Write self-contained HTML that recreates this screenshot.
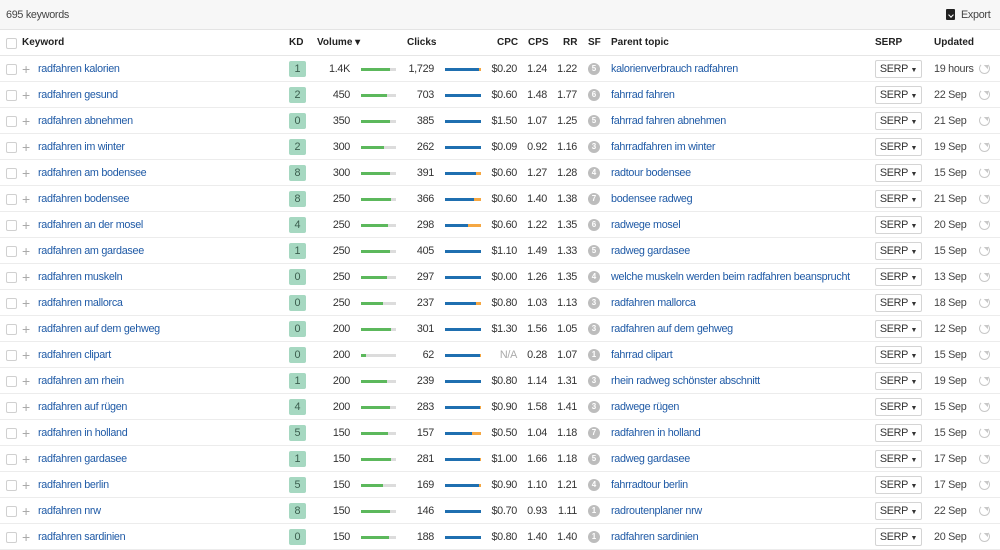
<!DOCTYPE html>
<html><head><meta charset="utf-8">
<style>
*{box-sizing:border-box;margin:0;padding:0}
body{width:1000px;height:550px;overflow:hidden;background:#fff;font-family:"Liberation Sans",Arial,sans-serif;font-size:10.8px;letter-spacing:-0.3px;color:#333;position:relative}
.top{position:absolute;left:0;top:0;width:1000px;height:30px;background:#f7f7f7;border-bottom:1px solid #e4e4e4}
.top .c{position:absolute;left:6px;top:9px;color:#444}
.top .e{position:absolute;left:961px;top:9px;color:#444}
.top .ic{position:absolute;left:946px;top:9px;width:9px;height:11px;background:#222;border-radius:1px}
.top .ic:after{content:"";position:absolute;left:3px;top:4px;width:3px;height:3px;border-bottom:1.5px solid #fff;border-right:1.5px solid #fff;transform:rotate(45deg)}
.hd{position:absolute;left:0;top:30px;width:1000px;height:26px;border-bottom:1px solid #e6e6e6;font-weight:bold;font-size:10px;letter-spacing:0;color:#222}
.hd span{position:absolute;top:7px}
.r{position:absolute;left:0;width:1000px;height:26px;border-bottom:1px solid #ececec}
.r>*{position:absolute}
.cb{left:6px;top:8px;width:11px;height:11px;border:1px solid #d0d0d0;border-radius:2px;background:#fff}
.hd .cb{top:8px;position:absolute}
.pl{left:22px;top:5px;font-size:14px;color:#aaa;font-weight:300}
.kw{left:38px;top:7px;color:#1f5aa6}
.kd{left:289px;top:5px;width:17px;height:16px;background:#a6d8c1;border-radius:2px;text-align:center;line-height:16px;color:#3b5e4e;letter-spacing:0}
.vo{left:300px;width:50px;top:7px;text-align:right}
.vb{left:361px;top:12px;width:35px;height:3px;background:#dcdcdc}
.vb i{display:block;height:3px;background:#5cb85c}
.cl{left:384px;width:50px;top:7px;text-align:right}
.cbr{left:445px;top:12px;width:36px;height:3px;background:#f5a742}
.cbr i{display:block;height:3px;background:#1f6fb0}
.cp{left:470px;width:47px;top:7px;text-align:right}
.cs{left:510px;width:37px;top:7px;text-align:right}
.rr{left:540px;width:37px;top:7px;text-align:right}
.sf{left:588px;top:7px;width:12px;height:12px;border-radius:50%;background:#bdbdbd;color:#fff;font-size:8px;text-align:center;line-height:12px;font-weight:bold;letter-spacing:0}
.pt{left:611px;top:7px;color:#1f5aa6}
.sp{left:875px;top:4px;width:47px;height:18px;border:1px solid #d4d4d4;border-radius:2px;text-align:center;line-height:16px;color:#333}
.sp small{font-size:7px}
.up{left:934px;top:7px;color:#444}
.rf{left:979px;top:7px;width:11px;height:11px;border:1.5px solid #c8c8c8;border-radius:50%;border-top-color:transparent}
.rf:after{content:"";position:absolute;right:-2px;top:-2px;border:3px solid transparent;border-left-color:#c8c8c8;transform:rotate(-45deg)}
.na{color:#aaa}
</style></head><body>
<div class="top"><span class="c">695 keywords</span><span class="ic"></span><span class="e">Export</span></div>
<div class="hd"><span class="cb" style="position:absolute"></span><span style="left:22px">Keyword</span><span style="left:289px">KD</span><span style="left:317px">Volume ▾</span><span style="left:407px">Clicks</span><span style="left:497px">CPC</span><span style="left:528px">CPS</span><span style="left:563px">RR</span><span style="left:588px">SF</span><span style="left:611px">Parent topic</span><span style="left:875px">SERP</span><span style="left:934px">Updated</span></div>

<div class="r" style="top:56px"><b class="cb"></b><b class="pl">+</b><span class="kw">radfahren kalorien</span><span class="kd">1</span><span class="vo">1.4K</span><span class="vb"><i style="width:82%"></i></span><span class="cl">1,729</span><span class="cbr"><i style="width:95%"></i></span><span class="cp">$0.20</span><span class="cs">1.24</span><span class="rr">1.22</span><span class="sf">5</span><span class="pt">kalorienverbrauch radfahren</span><span class="sp">SERP <small>▼</small></span><span class="up">19 hours</span><span class="rf"></span></div>
<div class="r" style="top:82px"><b class="cb"></b><b class="pl">+</b><span class="kw">radfahren gesund</span><span class="kd">2</span><span class="vo">450</span><span class="vb"><i style="width:73%"></i></span><span class="cl">703</span><span class="cbr"><i style="width:100%"></i></span><span class="cp">$0.60</span><span class="cs">1.48</span><span class="rr">1.77</span><span class="sf">6</span><span class="pt">fahrrad fahren</span><span class="sp">SERP <small>▼</small></span><span class="up">22 Sep</span><span class="rf"></span></div>
<div class="r" style="top:108px"><b class="cb"></b><b class="pl">+</b><span class="kw">radfahren abnehmen</span><span class="kd">0</span><span class="vo">350</span><span class="vb"><i style="width:82%"></i></span><span class="cl">385</span><span class="cbr"><i style="width:100%"></i></span><span class="cp">$1.50</span><span class="cs">1.07</span><span class="rr">1.25</span><span class="sf">5</span><span class="pt">fahrrad fahren abnehmen</span><span class="sp">SERP <small>▼</small></span><span class="up">21 Sep</span><span class="rf"></span></div>
<div class="r" style="top:134px"><b class="cb"></b><b class="pl">+</b><span class="kw">radfahren im winter</span><span class="kd">2</span><span class="vo">300</span><span class="vb"><i style="width:65%"></i></span><span class="cl">262</span><span class="cbr"><i style="width:100%"></i></span><span class="cp">$0.09</span><span class="cs">0.92</span><span class="rr">1.16</span><span class="sf">3</span><span class="pt">fahrradfahren im winter</span><span class="sp">SERP <small>▼</small></span><span class="up">19 Sep</span><span class="rf"></span></div>
<div class="r" style="top:160px"><b class="cb"></b><b class="pl">+</b><span class="kw">radfahren am bodensee</span><span class="kd">8</span><span class="vo">300</span><span class="vb"><i style="width:82%"></i></span><span class="cl">391</span><span class="cbr"><i style="width:85%"></i></span><span class="cp">$0.60</span><span class="cs">1.27</span><span class="rr">1.28</span><span class="sf">4</span><span class="pt">radtour bodensee</span><span class="sp">SERP <small>▼</small></span><span class="up">15 Sep</span><span class="rf"></span></div>
<div class="r" style="top:186px"><b class="cb"></b><b class="pl">+</b><span class="kw">radfahren bodensee</span><span class="kd">8</span><span class="vo">250</span><span class="vb"><i style="width:87%"></i></span><span class="cl">366</span><span class="cbr"><i style="width:80%"></i></span><span class="cp">$0.60</span><span class="cs">1.40</span><span class="rr">1.38</span><span class="sf">7</span><span class="pt">bodensee radweg</span><span class="sp">SERP <small>▼</small></span><span class="up">21 Sep</span><span class="rf"></span></div>
<div class="r" style="top:212px"><b class="cb"></b><b class="pl">+</b><span class="kw">radfahren an der mosel</span><span class="kd">4</span><span class="vo">250</span><span class="vb"><i style="width:77%"></i></span><span class="cl">298</span><span class="cbr"><i style="width:65%"></i></span><span class="cp">$0.60</span><span class="cs">1.22</span><span class="rr">1.35</span><span class="sf">6</span><span class="pt">radwege mosel</span><span class="sp">SERP <small>▼</small></span><span class="up">20 Sep</span><span class="rf"></span></div>
<div class="r" style="top:238px"><b class="cb"></b><b class="pl">+</b><span class="kw">radfahren am gardasee</span><span class="kd">1</span><span class="vo">250</span><span class="vb"><i style="width:82%"></i></span><span class="cl">405</span><span class="cbr"><i style="width:100%"></i></span><span class="cp">$1.10</span><span class="cs">1.49</span><span class="rr">1.33</span><span class="sf">5</span><span class="pt">radweg gardasee</span><span class="sp">SERP <small>▼</small></span><span class="up">15 Sep</span><span class="rf"></span></div>
<div class="r" style="top:264px"><b class="cb"></b><b class="pl">+</b><span class="kw">radfahren muskeln</span><span class="kd">0</span><span class="vo">250</span><span class="vb"><i style="width:73%"></i></span><span class="cl">297</span><span class="cbr"><i style="width:100%"></i></span><span class="cp">$0.00</span><span class="cs">1.26</span><span class="rr">1.35</span><span class="sf">4</span><span class="pt">welche muskeln werden beim radfahren beansprucht</span><span class="sp">SERP <small>▼</small></span><span class="up">13 Sep</span><span class="rf"></span></div>
<div class="r" style="top:290px"><b class="cb"></b><b class="pl">+</b><span class="kw">radfahren mallorca</span><span class="kd">0</span><span class="vo">250</span><span class="vb"><i style="width:62%"></i></span><span class="cl">237</span><span class="cbr"><i style="width:85%"></i></span><span class="cp">$0.80</span><span class="cs">1.03</span><span class="rr">1.13</span><span class="sf">3</span><span class="pt">radfahren mallorca</span><span class="sp">SERP <small>▼</small></span><span class="up">18 Sep</span><span class="rf"></span></div>
<div class="r" style="top:316px"><b class="cb"></b><b class="pl">+</b><span class="kw">radfahren auf dem gehweg</span><span class="kd">0</span><span class="vo">200</span><span class="vb"><i style="width:85%"></i></span><span class="cl">301</span><span class="cbr"><i style="width:100%"></i></span><span class="cp">$1.30</span><span class="cs">1.56</span><span class="rr">1.05</span><span class="sf">3</span><span class="pt">radfahren auf dem gehweg</span><span class="sp">SERP <small>▼</small></span><span class="up">12 Sep</span><span class="rf"></span></div>
<div class="r" style="top:342px"><b class="cb"></b><b class="pl">+</b><span class="kw">radfahren clipart</span><span class="kd">0</span><span class="vo">200</span><span class="vb"><i style="width:15%"></i></span><span class="cl">62</span><span class="cbr"><i style="width:97%"></i></span><span class="cp na">N/A</span><span class="cs">0.28</span><span class="rr">1.07</span><span class="sf">1</span><span class="pt">fahrrad clipart</span><span class="sp">SERP <small>▼</small></span><span class="up">15 Sep</span><span class="rf"></span></div>
<div class="r" style="top:368px"><b class="cb"></b><b class="pl">+</b><span class="kw">radfahren am rhein</span><span class="kd">1</span><span class="vo">200</span><span class="vb"><i style="width:75%"></i></span><span class="cl">239</span><span class="cbr"><i style="width:100%"></i></span><span class="cp">$0.80</span><span class="cs">1.14</span><span class="rr">1.31</span><span class="sf">3</span><span class="pt">rhein radweg schönster abschnitt</span><span class="sp">SERP <small>▼</small></span><span class="up">19 Sep</span><span class="rf"></span></div>
<div class="r" style="top:394px"><b class="cb"></b><b class="pl">+</b><span class="kw">radfahren auf rügen</span><span class="kd">4</span><span class="vo">200</span><span class="vb"><i style="width:82%"></i></span><span class="cl">283</span><span class="cbr"><i style="width:97%"></i></span><span class="cp">$0.90</span><span class="cs">1.58</span><span class="rr">1.41</span><span class="sf">3</span><span class="pt">radwege rügen</span><span class="sp">SERP <small>▼</small></span><span class="up">15 Sep</span><span class="rf"></span></div>
<div class="r" style="top:420px"><b class="cb"></b><b class="pl">+</b><span class="kw">radfahren in holland</span><span class="kd">5</span><span class="vo">150</span><span class="vb"><i style="width:77%"></i></span><span class="cl">157</span><span class="cbr"><i style="width:75%"></i></span><span class="cp">$0.50</span><span class="cs">1.04</span><span class="rr">1.18</span><span class="sf">7</span><span class="pt">radfahren in holland</span><span class="sp">SERP <small>▼</small></span><span class="up">15 Sep</span><span class="rf"></span></div>
<div class="r" style="top:446px"><b class="cb"></b><b class="pl">+</b><span class="kw">radfahren gardasee</span><span class="kd">1</span><span class="vo">150</span><span class="vb"><i style="width:85%"></i></span><span class="cl">281</span><span class="cbr"><i style="width:97%"></i></span><span class="cp">$1.00</span><span class="cs">1.66</span><span class="rr">1.18</span><span class="sf">5</span><span class="pt">radweg gardasee</span><span class="sp">SERP <small>▼</small></span><span class="up">17 Sep</span><span class="rf"></span></div>
<div class="r" style="top:472px"><b class="cb"></b><b class="pl">+</b><span class="kw">radfahren berlin</span><span class="kd">5</span><span class="vo">150</span><span class="vb"><i style="width:62%"></i></span><span class="cl">169</span><span class="cbr"><i style="width:94%"></i></span><span class="cp">$0.90</span><span class="cs">1.10</span><span class="rr">1.21</span><span class="sf">4</span><span class="pt">fahrradtour berlin</span><span class="sp">SERP <small>▼</small></span><span class="up">17 Sep</span><span class="rf"></span></div>
<div class="r" style="top:498px"><b class="cb"></b><b class="pl">+</b><span class="kw">radfahren nrw</span><span class="kd">8</span><span class="vo">150</span><span class="vb"><i style="width:82%"></i></span><span class="cl">146</span><span class="cbr"><i style="width:100%"></i></span><span class="cp">$0.70</span><span class="cs">0.93</span><span class="rr">1.11</span><span class="sf">1</span><span class="pt">radroutenplaner nrw</span><span class="sp">SERP <small>▼</small></span><span class="up">22 Sep</span><span class="rf"></span></div>
<div class="r" style="top:524px"><b class="cb"></b><b class="pl">+</b><span class="kw">radfahren sardinien</span><span class="kd">0</span><span class="vo">150</span><span class="vb"><i style="width:80%"></i></span><span class="cl">188</span><span class="cbr"><i style="width:100%"></i></span><span class="cp">$0.80</span><span class="cs">1.40</span><span class="rr">1.40</span><span class="sf">1</span><span class="pt">radfahren sardinien</span><span class="sp">SERP <small>▼</small></span><span class="up">20 Sep</span><span class="rf"></span></div>
</body></html>
